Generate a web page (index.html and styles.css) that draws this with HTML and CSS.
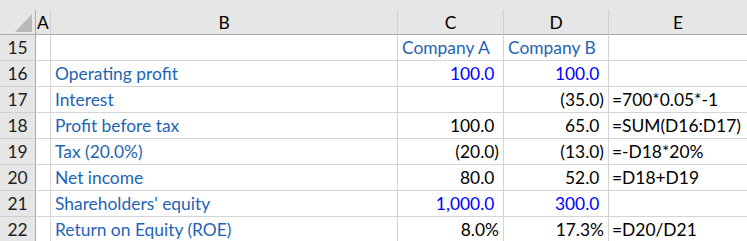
FILE: index.html
```html
<!DOCTYPE html>
<html>
<head>
<meta charset="utf-8">
<link rel="stylesheet" href="styles.css">
</head>
<body>
<div class="sheet">
  <div class="top"></div>
  <div class="hdr corner"><span class="tri"></span></div>
  <div class="hdr col">A</div>
  <div class="hdr col">B</div>
  <div class="hdr col">C</div>
  <div class="hdr col">D</div>
  <div class="hdr col last">E</div>

  <div class="rh">15</div><div class="c"></div><div class="c"></div>
  <div class="c lbl">Company A</div><div class="c lbl">Company B</div><div class="c"></div>

  <div class="rh">16</div><div class="c"></div><div class="c lbl">Operating profit</div>
  <div class="c num inp">100.0<i>)</i></div><div class="c num inp">100.0<i>)</i></div><div class="c"></div>

  <div class="rh">17</div><div class="c"></div><div class="c lbl">Interest</div>
  <div class="c num"></div><div class="c num">(35.0)</div><div class="c f">=700*0.05*-1</div>

  <div class="rh">18</div><div class="c"></div><div class="c lbl">Profit before tax</div>
  <div class="c num">100.0<i>)</i></div><div class="c num">65.0<i>)</i></div><div class="c f">=SUM(D16:D17)</div>

  <div class="rh">19</div><div class="c"></div><div class="c lbl">Tax (20.0%)</div>
  <div class="c num">(20.0)</div><div class="c num">(13.0)</div><div class="c f">=-D18*20%</div>

  <div class="rh">20</div><div class="c"></div><div class="c lbl">Net income</div>
  <div class="c num">80.0<i>)</i></div><div class="c num">52.0<i>)</i></div><div class="c f">=D18+D19</div>

  <div class="rh">21</div><div class="c"></div><div class="c lbl">Shareholders' equity</div>
  <div class="c num inp">1,000.0<i>)</i></div><div class="c num inp">300.0<i>)</i></div><div class="c"></div>

  <div class="rh">22</div><div class="c"></div><div class="c lbl">Return on Equity (ROE)</div>
  <div class="c num">8.0%</div><div class="c num">17.3%</div><div class="c f">=D20/D21</div>
</div>
</body>
</html>
```
FILE: styles.css
```css
html, body {
  margin: 0;
  padding: 0;
  background: #ffffff;
}
.sheet {
  display: grid;
  grid-template-columns: 36px 15px 347px 106px 105px 1fr;
  grid-template-rows: 10px 25px repeat(8, 26px);
  width: 747px;
  font-family: Lato, "Liberation Sans", sans-serif;
  font-size: 17.4px;
  color: #000;
  overflow: hidden;
}
.top {
  grid-column: 1 / -1;
  background: #e6e6e6;
}
.hdr {
  background: #e6e6e6;
  border-right: 1px solid #cfcfcf;
  border-bottom: 1px solid #ababab;
  box-sizing: border-box;
  display: flex;
  align-items: center;
  justify-content: center;
  position: relative;
}
.hdr.corner {
  border-right-color: #ababab;
}
.hdr.last { border-right: none; }
.tri {
  position: absolute;
  right: 3px;
  bottom: 2px;
  width: 0;
  height: 0;
  border-left: 17px solid transparent;
  border-bottom: 18px solid #b8b8b8;
}
.rh {
  background: #e6e6e6;
  border-right: 1px solid #ababab;
  border-bottom: 1px solid #cfcfcf;
  box-sizing: border-box;
  display: flex;
  align-items: center;
  justify-content: center;
  color: #222;
}
.c {
  border-right: 1px solid #d4d4d4;
  border-bottom: 1px solid #d4d4d4;
  box-sizing: border-box;
  display: flex;
  align-items: center;
  white-space: nowrap;
  overflow: visible;
}
.c:nth-child(6n+7), .c.f { border-right: none; }
.lbl {
  color: #1f64b4;
  padding-left: 4px;
}
.num {
  justify-content: flex-end;
  padding-right: 4px;
}
.num i {
  font-style: normal;
  visibility: hidden;
}
.inp { color: #0000ff; }
.f {
  padding-left: 3px;
}
```
